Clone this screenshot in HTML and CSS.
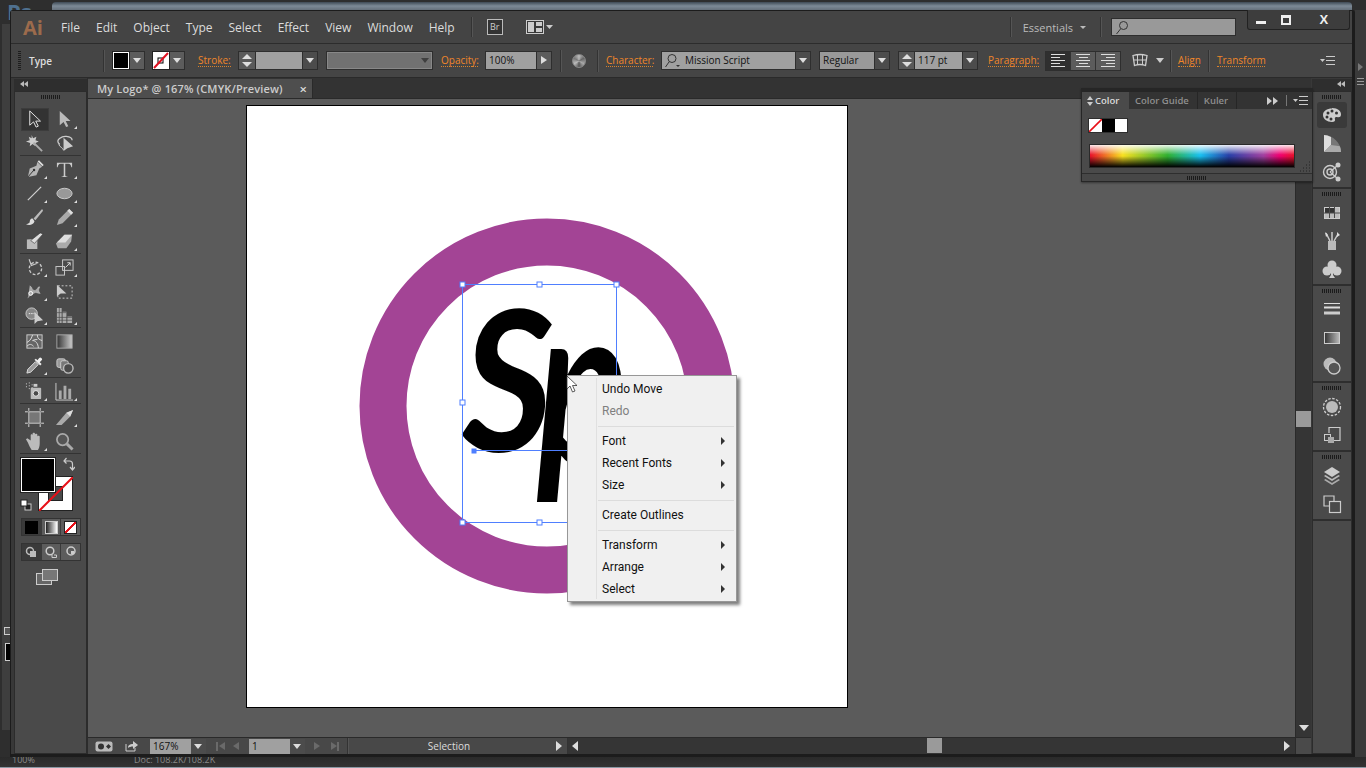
FILE: index.html
```html
<!DOCTYPE html>
<html lang="en">

<head>
	<meta charset="UTF-8">
	<meta name="viewport" content="width=device-width, initial-scale=1.0">
	<title>Adobe Illustrator - My Logo</title>
	<link rel="stylesheet" href="styles.css">
</head>

<body>

	<!-- windows behind the main one -->
	<div class="back-title"></div>
	<div class="back-ps">Ps</div>
	<div class="back-left"><span class="back-default"></span><span class="back-swatch"></span></div>
	<div class="back-status"><span class="back-zoom">100%</span><span class="back-doc">Doc: 108.2K/108.2K</span></div>
	<div class="back-edge"><span class="back-tri"></span><span class="back-lines"></span></div>

	<div class="window">

		<div class="menubar">
			<span class="logo">Ai</span>
			<nav class="menu">
				<span>File</span><span>Edit</span><span>Object</span><span>Type</span><span>Select</span><span>Effect</span><span>View</span><span>Window</span><span>Help</span>
			</nav>
			<span class="vsep bar-sep"></span>
			<span class="br">Br</span>
			<svg class="layout-ico" width="28" height="14" viewBox="0 0 28 14"><rect x="0.5" y="0.5" width="17" height="13" fill="#3a3a3a" stroke="#ccc"/><rect x="2" y="2" width="6" height="10" fill="#ccc"/><rect x="10" y="2" width="6" height="4" fill="#ccc"/><rect x="10" y="8" width="6" height="4" fill="#ccc"/><path d="M20 5h7l-3.500 4z" fill="#ccc"/></svg>
			<span class="vsep ess-sep"></span>
			<span class="essentials">Essentials</span>
			<span class="tiny-arrow"></span>
			<span class="vsep search-sep"></span>
			<div class="search">
				<svg width="14" height="16" viewBox="0 0 14 16"><circle cx="8.500" cy="5.500" r="4" fill="none" stroke="#333"/><path d="M5.500 9 1.500 14" stroke="#333"/></svg>
			</div>
			<div class="winbtns">
				<span class="winbtn"><i class="ico-min"></i></span>
				<span class="winbtn"><i class="ico-max"></i></span>
				<span class="winbtn close">X</span>
			</div>
		</div>

		<div class="controlbar">
			<span class="grip-v"></span>
			<span class="ctl-name">Type</span>
			<span class="vsep sep-a"></span>
			<span class="swatch fill-swatch"></span><span class="drop"></span>
			<span class="swatch stroke-swatch"><svg width="16" height="17" viewBox="0 0 16 17"><rect x="5" y="6" width="5" height="5" fill="none" stroke="#000"/><path d="M1 16 15 1" stroke="#e01020" stroke-width="2"/></svg></span><span class="drop"></span>
			<span class="orange lbl-stroke">Stroke:</span>
			<span class="spin"></span><span class="field stroke-field"></span><span class="drop dark"></span>
			<span class="field disabled-field"><i class="drop-off"></i></span>
			<span class="orange lbl-opacity">Opacity:</span>
			<span class="field opacity-field">100%</span><span class="drop side"></span>
			<span class="vsep sep-b"></span>
			<span class="globe"></span>
			<span class="vsep sep-c"></span>
			<span class="orange lbl-char">Character:</span>
			<span class="field font-field">
				<svg width="17" height="15" viewBox="0 0 17 15"><circle cx="8" cy="5.500" r="4" fill="none" stroke="#333"/><path d="M5 9 1.500 14" stroke="#333"/><path d="M12 12h4l-2 2z" fill="#333"/></svg>
				Mission Script
			</span><span class="drop dark"></span>
			<span class="field style-field">Regular</span><span class="drop dark"></span>
			<span class="spin size-spin"></span><span class="field size-field">117 pt</span><span class="drop dark"></span>
			<span class="orange lbl-para">Paragraph:</span>
			<div class="align-group">
				<span class="align on"><i class="l1"></i><i class="l2"></i><i class="l1"></i><i class="l2"></i><i class="l1"></i></span>
				<span class="align c"><i class="l1"></i><i class="l2"></i><i class="l1"></i><i class="l2"></i><i class="l1"></i></span>
				<span class="align r"><i class="l1"></i><i class="l2"></i><i class="l1"></i><i class="l2"></i><i class="l1"></i></span>
			</div>
			<svg class="envelope" width="16" height="15" viewBox="0 0 16 15"><path d="M1 2.500q7-2 14 0l-1.500 10q-5.500-2-11 0z" fill="none" stroke="#ccc" stroke-width="1.300"/><path d="M5.500 2v10M10.500 2v10M2 7h12" stroke="#ccc"/></svg>
			<span class="tiny-down"></span>
			<span class="vsep sep-d"></span>
			<span class="orange lbl-align">Align</span>
			<span class="vsep sep-e"></span>
			<span class="orange lbl-transform">Transform</span>
			<svg class="bar-menu" width="15" height="9" viewBox="0 0 15 9"><path d="M0 3h5L2.500 6z" fill="#ccc"/><path d="M6 .5h9M6 4.500h9M6 8.500h9" stroke="#ccc"/></svg>
		</div>

		<div class="workspace">

			<div class="left-col">
				<div class="collapse-strip"><span class="chev-left"></span></div>
				<div class="toolbar">
					<div class="grip-h"></div>

					<div class="tools">
						<span class="tool active"><svg viewBox="0 0 20 20"><path d="M5 1v15l4-3.500 2.700 5.500 2.300-1-2.700-5.300h5z" fill="#3a3a3a" stroke="#e8e8e8"/></svg></span>
						<span class="tool fly"><svg viewBox="0 0 20 20"><path d="M5 1v15l4-3.500 2.700 5.500 2.300-1-2.700-5.300h5z" fill="#bbb"/></svg></span>
						<span class="tool"><svg viewBox="0 0 20 20"><path d="M7 1l1.500 3.500L12 3l-1 3.500 3.500 1.500-3.500 1.500L11 13 8 10.500 5 13l.5-3.500L1 8l4-1.500L4 3l3 1.500z" fill="#ccc"/><path d="M9 9l9 9" stroke="#aaa" stroke-width="2"/></svg></span>
						<span class="tool"><svg viewBox="0 0 20 20"><path d="M5 11C-1 6 8 2 12 2.500s6 2 6 4" fill="none" stroke="#ccc" stroke-width="1.400"/><path d="M4 11c1 3 4 3 5 6" fill="none" stroke="#ccc"/><path d="M9 4v14l4-3 6-2z" fill="#ccc"/></svg></span>
					</div>
					<div class="tool-sep"></div>

					<div class="tools">
						<span class="tool fly"><svg viewBox="0 0 20 20"><path d="M13 2l5 5-3 2-3 7-9 2 2-9 7-3z" fill="#b5b5b5"/><path d="M3 18l6-7" stroke="#333"/><circle cx="9.500" cy="10.500" r="1.300" fill="#333"/><path d="M14 1l5 5" stroke="#ddd" stroke-width="2"/></svg></span>
						<span class="tool fly"><svg viewBox="0 0 20 20"><path d="M2 3h16v4.500h-.8c-.4-2-1.200-3.500-3-3.500h-3.400v12c0 1 .6 1.400 2.200 1.400v.6H7v-.6c1.600 0 2.200-.4 2.200-1.400V4H5.800c-1.800 0-2.600 1.500-3 3.500H2z" fill="#ccc"/></svg></span>
						<span class="tool fly"><svg viewBox="0 0 20 20"><path d="M3 17 17 3" stroke="#d0d0d0" stroke-width="1.300"/></svg></span>
						<span class="tool fly"><svg viewBox="0 0 20 20"><ellipse cx="10" cy="10" rx="8" ry="5.500" fill="#999" stroke="#ccc"/></svg></span>
						<span class="tool"><svg viewBox="0 0 20 20"><path d="M18 1 9 11l2 2L19 3z" fill="#bbb"/><path d="M8 11c-3 0-3 3-3 4-1 1-2 2-4 2 3 1.500 8 1 9-3z" fill="#ddd"/></svg></span>
						<span class="tool fly"><svg viewBox="0 0 20 20"><path d="M15 1l4 4-11 11-6 2 2-6z" fill="#aaa"/><path d="M15 1l4 4-2 2-4-4z" fill="#ddd"/></svg></span>
						<span class="tool"><svg viewBox="0 0 20 20"><path d="M2 8l11-1v11H2z" fill="#bbb"/><path d="M6 9l4 3 9-10-3-1z" fill="#ddd" stroke="#333" stroke-width=".6"/></svg></span>
						<span class="tool fly"><svg viewBox="0 0 20 20"><path d="M1 12 10 3h8l-1 7-5 7H3z" fill="#aaa"/><path d="M10 3h8l-7 8H2z" fill="#ddd"/></svg></span>
					</div>
					<div class="tool-sep"></div>

					<div class="tools">
						<span class="tool fly"><svg viewBox="0 0 20 20"><circle cx="11" cy="11" r="6.500" fill="none" stroke="#ccc" stroke-width="1.400" stroke-dasharray="3 2"/><path d="M6 1v7h6" fill="none" stroke="#ccc" stroke-width="1.200" transform="rotate(-20 6 6)"/></svg></span>
						<span class="tool fly"><svg viewBox="0 0 20 20"><rect x="8" y="2" width="11" height="11" fill="#4a4a4a" stroke="#ccc"/><rect x="1" y="9" width="9" height="9" fill="none" stroke="#ccc"/><path d="M11 10l5-5M13 5h3v3" fill="none" stroke="#ddd"/></svg></span>
						<span class="tool fly"><svg viewBox="0 0 20 20"><path d="M5 4c3 1 2 5 5 5s3-4 5-4-3 3 1 7c-4 0-4-2-7 0-2 2-5 2-6 5" fill="#aaa" stroke="#ccc" stroke-width=".5"/><circle cx="6" cy="12" r="2" fill="none" stroke="#fff"/></svg></span>
						<span class="tool"><svg viewBox="0 0 20 20"><rect x="3" y="4" width="15" height="13" fill="none" stroke="#ccc" stroke-dasharray="2 2"/><path d="M2 3v12l4-3h6z" fill="#ccc"/></svg></span>
						<span class="tool fly"><svg viewBox="0 0 20 20"><circle cx="7" cy="8" r="6" fill="#888" stroke="#ccc"/><path d="M4 8h6" stroke="#eee" stroke-dasharray="1.500 1"/><path d="M10 6v13l3-3 6-1z" fill="#ccc"/></svg></span>
						<span class="tool fly"><svg viewBox="0 0 20 20"><path d="M2 2h5v16H2zM8 6h4v12H8zM13 11h5v7h-5z" fill="#aaa"/><path d="M2 7h10M2 12h16M2 15h16M4.500 2v16" stroke="#4a4a4a" stroke-width=".7"/></svg></span>
					</div>
					<div class="tool-sep"></div>

					<div class="tools">
						<span class="tool"><svg viewBox="0 0 20 20"><rect x="2" y="3" width="16" height="14" fill="#666" stroke="#ccc"/><path d="M2 11c4-2 5-5 6-8M8 9c3 0 6 3 6 8M2 15c3-3 5-2 7 0M13 3c0 4 2 5 5 6M8 9c2-1 3-1 5-1" fill="none" stroke="#ddd"/></svg></span>
						<span class="tool"><svg viewBox="0 0 20 20"><defs><linearGradient id="gt"><stop offset="0" stop-color="#333"/><stop offset="1" stop-color="#ccc"/></linearGradient></defs><rect x="2" y="3" width="16" height="14" fill="url(#gt)" stroke="#aaa"/></svg></span>
						<span class="tool fly"><svg viewBox="0 0 20 20"><path d="M2 18l1-4 8-8 3 3-8 8z" fill="#999" stroke="#ddd"/><path d="M10 4l6 6 1.500-1.500-2-2 2.500-2.500a2 2 0 0 0-3-2l-2 2.500-1.500-1.500z" fill="#eee"/></svg></span>
						<span class="tool"><svg viewBox="0 0 20 20"><rect x="2" y="3" width="9" height="9" rx="2" fill="#999" stroke="#ccc"/><rect x="6" y="5" width="8" height="10" rx="2" fill="#777" stroke="#ccc"/><circle cx="14" cy="13" r="5" fill="#4a4a4a" stroke="#bbb" stroke-width="1.500"/></svg></span>
					</div>
					<div class="tool-sep"></div>

					<div class="tools">
						<span class="tool fly"><svg viewBox="0 0 20 20"><path d="M1 2h1M4 1h1M1 5h1M4 4h1M7 3h1M4 7h1M7 6h1" stroke="#ddd"/><rect x="9" y="2" width="4" height="3" fill="#ccc"/><rect x="6" y="6" width="11" height="12" rx="1" fill="#bbb"/><circle cx="11.500" cy="12" r="3" fill="#4a4a4a" stroke="#eee"/></svg></span>
						<span class="tool fly"><svg viewBox="0 0 20 20"><path d="M1 1v18h18" fill="none" stroke="#ccc"/><path d="M4 9h3v9H4zM9 4h3v14H9zM14 7h3v11h-3z" fill="#aaa"/></svg></span>
					</div>
					<div class="tool-sep"></div>

					<div class="tools">
						<span class="tool"><svg viewBox="0 0 20 20"><rect x="4" y="4" width="12" height="12" fill="#777" stroke="#ccc"/><path d="M0 4h3M17 4h3M0 16h3M17 16h3M4 0v3M16 0v3M4 17v3M16 17v3" stroke="#ddd"/></svg></span>
						<span class="tool fly"><svg viewBox="0 0 20 20"><path d="M1 18 12 5l7-3-3 7-9 9z" fill="#aaa"/><path d="M12 5l4 4 3-7z" fill="#ddd"/></svg></span>
						<span class="tool fly"><svg viewBox="0 0 20 20"><path d="M3 11 1 7.500l1.500-1L6 9V3.500C6 2 8 2 8 3.500V2c0-1.500 2.500-1.500 2.500 0v1c0-1.500 2.500-1.500 2.500 0v2c0-1.500 2.500-1.500 2.500 0v7c0 3-1 6-2 7H7c-1-2-3-5-4-8z" fill="#bbb"/></svg></span>
						<span class="tool"><svg viewBox="0 0 20 20"><circle cx="8" cy="8" r="6" fill="#555" stroke="#aaa" stroke-width="1.800"/><path d="M12.500 12.500 18.500 18.500" stroke="#aaa" stroke-width="3"/></svg></span>
					</div>
					<div class="tool-sep"></div>

					<div class="color-box">
						<span class="big-fill"></span>
						<span class="big-stroke"><i></i><svg width="34" height="34" viewBox="0 0 34 34"><path d="M0 34 34 0" stroke="#e81018" stroke-width="2"/></svg></span>
						<svg class="swap" width="12" height="14" viewBox="0 0 12 14"><path d="M1 4h5.500c2 0 3 1 3 3v5M3.500 1 1 4l2.500 2.500M7 10l2.500 3L12 10" fill="none" stroke="#ccc" stroke-width="1.200"/></svg>
						<svg class="default-colors" width="12" height="12" viewBox="0 0 12 12"><rect x="5" y="5" width="6" height="6" fill="#222" stroke="#ccc"/><rect x="1" y="1" width="6" height="6" fill="#fff" stroke="#222"/></svg>
					</div>

					<div class="mode-row">
						<span class="mode dark"><i class="mode-black"></i></span>
						<span class="mode"><i class="mode-grad"></i></span>
						<span class="mode"><i class="mode-none"></i></span>
					</div>

					<div class="mode-row draw-row">
						<span class="mode dark"><svg width="12" height="12" viewBox="0 0 12 12"><circle cx="5" cy="5" r="3.500" fill="none" stroke="#bbb" stroke-width="1.500"/><rect x="5" y="5" width="6" height="6" fill="#bbb"/></svg></span>
						<span class="mode"><svg width="12" height="12" viewBox="0 0 12 12"><circle cx="5" cy="5" r="3.800" fill="#555" stroke="#ccc" stroke-width="1.500"/><path d="M9 9h2.500v2.500H7V9" fill="none" stroke="#ccc"/></svg></span>
						<span class="mode"><svg width="12" height="12" viewBox="0 0 12 12"><circle cx="6" cy="5" r="4" fill="none" stroke="#ccc" stroke-width="1.500"/><rect x="6" y="5" width="3" height="3" fill="#ccc"/></svg></span>
					</div>

					<svg class="screen-mode" width="22" height="16" viewBox="0 0 22 16"><rect x="0.500" y="4.500" width="15" height="11" fill="#666" stroke="#ccc"/><rect x="6.500" y="0.500" width="15" height="11" fill="#777" stroke="#ccc"/></svg>
				</div>
			</div>

			<div class="doc-col">
				<div class="tabs">
					<div class="tab"><span>My Logo* @ 167% (CMYK/Preview)</span><span class="tab-x">×</span></div>
				</div>

				<div class="doc-row">
					<div class="canvas">
						<div class="artboard">
							<svg class="art" width="600" height="600" viewBox="0 0 600 600">
								<circle cx="300" cy="300" r="164" fill="none" stroke="#a34495" stroke-width="47"/>
								<g class="sp">
									<text transform="translate(215 345) scale(.9 1)">S</text>
									<text class="sp-p" transform="translate(290 358) scale(.75 1)">p</text>
								</g>
								<g class="sel">
									<rect x="215.500" y="178.500" width="154" height="238" fill="none"/>
									<path d="M228 344.500H370"/>
									<rect class="hd" x="213" y="176" width="5" height="5"/>
									<rect class="hd" x="290" y="176" width="5" height="5"/>
									<rect class="hd" x="367" y="176" width="5" height="5"/>
									<rect class="hd" x="213" y="294" width="5" height="5"/>
									<rect class="hd" x="213" y="414" width="5" height="5"/>
									<rect class="hd" x="290" y="414" width="5" height="5"/>
									<rect class="hd-f" x="225" y="343" width="4" height="4"/>
								</g>
							</svg>
						</div>

						<ul class="context-menu">
							<li>Undo Move</li>
							<li class="off">Redo</li>
							<li class="div"></li>
							<li class="sub">Font</li>
							<li class="sub">Recent Fonts</li>
							<li class="sub">Size</li>
							<li class="div"></li>
							<li>Create Outlines</li>
							<li class="div"></li>
							<li class="sub">Transform</li>
							<li class="sub">Arrange</li>
							<li class="sub">Select</li>
						</ul>
						<svg class="cursor" width="13" height="19" viewBox="0 0 13 19"><path d="M1 1v13l3-3 2.500 6 2.500-1-2.500-5.500H11z" fill="#fff" stroke="#333" stroke-width=".8"/></svg>
					</div>
					<div class="vscroll">
						<span class="vthumb"></span>
						<span class="arrow-down"></span>
					</div>
				</div>

				<div class="statusbar">
					<div class="status-left">
						<svg class="st-gear" width="18" height="11" viewBox="0 0 18 11"><rect x="0.500" y="0.500" width="17" height="10" rx="2" fill="#bbb"/><circle cx="6" cy="5.500" r="3" fill="#333"/><path d="M11 5.500l2.500-2.500 2.500 2.500-2.500 2.500z" fill="#333"/></svg>
						<svg class="st-share" width="13" height="12" viewBox="0 0 13 12"><path d="M1 4v7h9V8" fill="none" stroke="#ccc"/><path d="M3 8c0-3 2-4 5-4V1l5 4-5 4V6.500C6 6.500 4 7 3 8z" fill="#ccc"/></svg>
						<span class="field zoom-field">167%</span><span class="drop dark st-drop"></span>
						<span class="nav first"></span><span class="nav prev"></span>
						<span class="field page-field">1</span><span class="drop dark st-drop"></span>
						<span class="nav next"></span><span class="nav last"></span>
						<span class="vsep st-sep"></span>
						<span class="st-label">Selection</span>
						<span class="tri-right"></span>
						<span class="vsep st-sep2"></span>
					</div>
					<div class="hscroll">
						<span class="tri-left"></span>
						<span class="hthumb"></span>
						<span class="tri-right end"></span>
					</div>
					<div class="corner"></div>
				</div>
			</div>

			<div class="dock-col">
				<div class="collapse-strip right"><span class="chev-left"></span></div>
				<div class="dock">
					<div class="dock-group">
						<div class="grip-h"></div>
						<span class="dock-btn active"><svg viewBox="0 0 20 20"><path d="M10 3c6 0 9 3 9 6.500 0 3-2.500 3-4 2.500-2-.5-2.500 1-2 2.500.3 1.200-.5 2.500-3 2.500-5 0-9-3-9-7s4-6.500 9-6.500z" fill="#ccc"/><circle cx="6" cy="8" r="1.500" fill="#333"/><circle cx="10" cy="6" r="1.500" fill="#333"/><circle cx="14.500" cy="8" r="1.500" fill="#333"/><circle cx="5" cy="12" r="1.500" fill="#333"/><circle cx="9" cy="14" r="1.500" fill="#333"/></svg></span>
						<span class="dock-btn"><svg viewBox="0 0 20 20"><path d="M2 1v17h17C19 9 11 1 2 1z" fill="#777"/><path d="M2 1v17l7-7V3C6.500 1.700 4 1 2 1z" fill="#ddd"/><path d="M2 18h17c0-2-.4-4-1.100-5.800L9 11z" fill="#aaa"/></svg></span>
						<span class="dock-btn"><svg viewBox="0 0 20 20"><circle cx="8" cy="10" r="6.500" fill="none" stroke="#ccc" stroke-width="1.400"/><circle cx="8" cy="10" r="3" fill="none" stroke="#ccc" stroke-width="1.400"/><path d="M8 10 16 3M8 10l8 7" stroke="#ccc" stroke-width="1.200"/><circle cx="16" cy="3" r="2.500" fill="#ccc"/><circle cx="16" cy="17" r="2.500" fill="#ccc"/></svg></span>
					</div>
					<div class="dock-group">
						<div class="grip-h"></div>
						<span class="dock-btn"><svg viewBox="0 0 20 20"><rect x="2.500" y="4.500" width="15" height="11" fill="#bbb" stroke="#ccc"/><path d="M3 5h4.500v5H3zM8 5h4.500v5H8z" fill="#333"/><path d="M7.500 4v11M12.500 4v11M2 10h16" stroke="#4a4a4a"/></svg></span>
						<span class="dock-btn"><svg viewBox="0 0 20 20"><rect x="6" y="10" width="8" height="9" fill="#bbb"/><path d="M8 10 4 2M10 10V1M12 10l4-7" stroke="#ccc" stroke-width="1.500"/><path d="M3 1l3 3-2 2zM15 1l3 3-3 2z" fill="#ddd"/></svg></span>
						<span class="dock-btn"><svg viewBox="0 0 20 20"><circle cx="10" cy="6" r="4.500" fill="#ccc"/><circle cx="5" cy="12" r="4.500" fill="#ccc"/><circle cx="15" cy="12" r="4.500" fill="#ccc"/><path d="M9 10h2v6l2 3H7l2-3z" fill="#ccc"/></svg></span>
					</div>
					<div class="dock-group">
						<div class="grip-h"></div>
						<span class="dock-btn"><svg viewBox="0 0 20 20"><path d="M2 3.500h16" stroke="#ddd"/><path d="M2 7.500h16" stroke="#ddd" stroke-width="2"/><path d="M2 13h16" stroke="#ccc" stroke-width="3"/></svg></span>
						<span class="dock-btn"><svg viewBox="0 0 20 20"><defs><linearGradient id="gd"><stop offset="0" stop-color="#333"/><stop offset="1" stop-color="#bbb"/></linearGradient></defs><rect x="2.500" y="4.500" width="15" height="11" fill="url(#gd)" stroke="#ccc"/></svg></span>
						<span class="dock-btn"><svg viewBox="0 0 20 20"><circle cx="8" cy="8" r="6.500" fill="#bbb"/><circle cx="12" cy="12" r="6" fill="#555" stroke="#ccc" stroke-width="1.300"/></svg></span>
					</div>
					<div class="dock-group">
						<div class="grip-h"></div>
						<span class="dock-btn"><svg viewBox="0 0 20 20"><circle cx="10" cy="10" r="6" fill="#bbb"/><circle cx="10" cy="10" r="8.500" fill="none" stroke="#ccc" stroke-width="1.300" stroke-dasharray="2.500 1.500"/></svg></span>
						<span class="dock-btn"><svg viewBox="0 0 20 20"><path d="M7 8V2.500h11v13H12" fill="none" stroke="#ccc" stroke-width="1.200"/><rect x="2.500" y="9.500" width="6" height="6" fill="none" stroke="#ccc"/><rect x="6" y="12" width="6" height="6" fill="#aaa"/></svg></span>
					</div>
					<div class="dock-group">
						<div class="grip-h"></div>
						<span class="dock-btn"><svg viewBox="0 0 20 20"><path d="M10 1l8 5-8 5-8-5z" fill="#ccc"/><path d="M3.500 9 2 10l8 5 8-5-1.500-1L10 13z" fill="#bbb"/><path d="M3.500 13 2 14l8 5 8-5-1.500-1L10 17z" fill="#aaa"/></svg></span>
						<span class="dock-btn"><svg viewBox="0 0 20 20"><path d="M8 12H2V2h10v5" fill="none" stroke="#ccc" stroke-width="1.200"/><rect x="7.500" y="7.500" width="11" height="11" fill="none" stroke="#ccc" stroke-width="1.200"/></svg></span>
					</div>
				</div>
			</div>
		</div>

		<!-- floating color panel -->
		<div class="color-panel">
			<div class="panel-tabs">
				<span class="ptab current"><i class="updown"></i>Color</span>
				<span class="ptab">Color Guide</span>
				<span class="ptab">Kuler</span>
				<span class="panel-ctl">
					<svg width="13" height="8" viewBox="0 0 13 8"><path d="M0 0l5 4-5 4zM6 0l5 4-5 4z" fill="#ccc"/></svg>
					<span class="panel-bar"></span>
					<svg width="15" height="9" viewBox="0 0 15 9"><path d="M0 3h5L2.500 6z" fill="#ccc"/><path d="M6 .5h9M6 4.500h9M6 8.500h9" stroke="#ccc"/></svg>
				</span>
			</div>
			<div class="panel-body">
				<div class="mini-swatches">
					<span class="ms none"><svg width="13" height="13" viewBox="0 0 13 13"><path d="M0 13 13 0" stroke="#e81018" stroke-width="1.600"/></svg></span><span class="ms black"></span><span class="ms white"></span>
				</div>
				<div class="spectrum"></div>
				<svg class="resize" width="11" height="11" viewBox="0 0 11 11"><path d="M9 1h1M6 4h1M9 4h1M3 7h1M6 7h1M9 7h1M0 10h1M3 10h1M6 10h1M9 10h1" stroke="#222"/></svg>
			</div>
			<div class="panel-foot"><div class="grip-h"></div></div>
		</div>

	</div>

</body>

</html>
```

FILE: styles.css
```css
/* Basic reset */
* {
	margin: 0;
	padding: 0;
	box-sizing: border-box;
}

body {
	width: 1366px;
	height: 768px;
	overflow: hidden;
	position: relative;
	background-color: #2e2e2e;
	font-family: "Open Sans", "Noto Sans", sans-serif;
	font-size: 11px;
	color: #ddd;
}

i {
	display: block;
	font-style: normal;
}

/* stuff behind the main window */
.back-title {
	position: absolute;
	left: 52px;
	top: 2px;
	width: 1300px;
	height: 10px;
	background: linear-gradient(to bottom, #3f4a55, #7d8a96 40%, #59636d);
	border-radius: 4px 4px 0 0;
}

.back-ps {
	position: absolute;
	left: 7px;
	top: 0;
	font-size: 22px;
	line-height: 22px;
	font-weight: 700;
	color: #4f7190;
}

.back-left {
	position: absolute;
	left: 2px;
	top: 24px;
	width: 10px;
	height: 706px;
	background-color: #3e3e3e;
}

.back-default {
	position: absolute;
	left: 2px;
	top: 603px;
	width: 7px;
	height: 8px;
	border: 1px solid #ccc;
	background-color: #555;
}

.back-swatch {
	position: absolute;
	left: 3px;
	top: 619px;
	width: 7px;
	height: 18px;
	background-color: #000;
	border: 1px solid #ccc;
}

.back-status {
	position: absolute;
	left: 0;
	top: 757px;
	width: 1366px;
	height: 11px;
	background: linear-gradient(#2a2a2a, #333);
	border-bottom: 1px solid #8a98a4;
	font-size: 9px;
	color: #8a8a8a;
	line-height: 5px;
}

.back-zoom {
	position: absolute;
	left: 12px;
	top: 0;
}

.back-doc {
	position: absolute;
	left: 134px;
	top: 0;
}

.back-edge {
	position: absolute;
	left: 1355px;
	top: 10px;
	width: 11px;
	height: 747px;
	background-color: #3a3a3a;
}

.back-tri {
	position: absolute;
	left: 3px;
	top: 53px;
	border-left: 5px solid #777;
	border-top: 4px solid transparent;
	border-bottom: 4px solid transparent;
}

.back-lines {
	position: absolute;
	left: 2px;
	top: 68px;
	width: 7px;
	height: 8px;
	background: repeating-linear-gradient(to bottom, #999 0 1px, transparent 1px 3px);
}

/* main window */
.window {
	position: absolute;
	left: 10px;
	top: 10px;
	width: 1345px;
	height: 747px;
	display: flex;
	flex-direction: column;
	background-color: #434343;
	border: 1px solid #1c1c1c;
	border-bottom-width: 3px;
	border-right-width: 3px;
	border-radius: 3px 3px 0 0;
}

.vsep {
	display: block;
	width: 1px;
	background-color: #333;
	box-shadow: 1px 0 0 #555;
}

/* top menu */
.menubar {
	height: 33px;
	display: flex;
	align-items: center;
	flex-shrink: 0;
	border-bottom: 1px solid #2c2c2c;
	background-color: #444;
	position: relative;
}

.logo {
	width: 39px;
	padding-left: 12px;
	font-size: 20px;
	font-weight: 700;
	color: #9c6b4c;
}

.menu {
	display: flex;
	margin-left: 11px;
	font-size: 12px;
	color: #dcdcdc;
}

.menu span {
	margin-right: 16px;
}

.bar-sep {
	height: 20px;
}

.br {
	width: 16px;
	height: 16px;
	margin-left: 15px;
	border: 1px solid #bbb;
	background-color: #333;
	font-size: 9px;
	line-height: 14px;
	text-align: center;
	color: #ccc;
}

.layout-ico {
	margin-left: 23px;
}

.ess-sep {
	height: 20px;
	margin-left: 456px;
}

.essentials {
	margin-left: 12px;
	font-size: 11px;
	color: #bbb;
}

.tiny-arrow {
	margin-left: 7px;
	border-top: 3px solid #bbb;
	border-left: 3px solid transparent;
	border-right: 3px solid transparent;
}

.search-sep {
	height: 20px;
	margin-left: 14px;
}

.search {
	width: 125px;
	height: 18px;
	margin-left: 10px;
	padding: 1px 0 0 3px;
	background-color: #999;
	border: 1px solid #2e2e2e;
}

.winbtns {
	position: absolute;
	right: 2px;
	top: -1px;
	width: 103px;
	height: 20px;
	display: flex;
	background-color: #3d3d3d;
	border: 1px solid #222;
	border-top: none;
	border-radius: 0 0 3px 3px;
}

.winbtn {
	flex: 1;
	display: flex;
	align-items: center;
	justify-content: center;
	color: #eee;
	font-weight: 700;
	font-size: 13px;
}

.winbtn.close {
	flex: 2;
	font-family: "Liberation Sans", sans-serif;
}

.ico-min {
	width: 10px;
	height: 3px;
	margin-top: 6px;
	background-color: #eee;
}

.ico-max {
	width: 10px;
	height: 10px;
	border: 2px solid #eee;
	border-top-width: 3px;
}

/* control bar */
.controlbar {
	height: 34px;
	display: flex;
	align-items: center;
	flex-shrink: 0;
	background-color: #454545;
	border-bottom: 1px solid #2a2a2a;
	color: #ddd;
}

.grip-v {
	width: 3px;
	height: 20px;
	margin-left: 7px;
	background: repeating-linear-gradient(to bottom, #1e1e1e 0 1px, transparent 1px 2px);
}

.ctl-name {
	margin-left: 8px;
	width: 74px;
	font-size: 10px;
	font-weight: 600;
}

.sep-a, .sep-b, .sep-c, .sep-d, .sep-e {
	height: 22px;
}

.swatch {
	width: 18px;
	height: 19px;
	border: 1px solid #222;
	display: block;
}

.fill-swatch {
	margin-left: 8px;
	background-color: #000;
	outline: 1px solid #fff;
	outline-offset: -2px;
}

.stroke-swatch {
	margin-left: 7px;
	background-color: #fff;
	line-height: 0;
}

.drop {
	width: 15px;
	height: 19px;
	display: block;
	position: relative;
	background-color: #5c5c5c;
	border: 1px solid #2e2e2e;
	border-left: none;
}

.drop::after {
	content: "";
	position: absolute;
	left: 3px;
	top: 6px;
	border-top: 5px solid #ddd;
	border-left: 4px solid transparent;
	border-right: 4px solid transparent;
}

.drop.side::after {
	left: 4px;
	top: 4px;
	border-left: 6px solid #ddd;
	border-top: 4px solid transparent;
	border-bottom: 4px solid transparent;
	border-right: none;
}

.drop.dark {
	background-color: #4c4c4c;
}

.orange {
	color: #f0862a;
	font-size: 10px;
	border-bottom: 1px dotted #d9822b;
	line-height: 12px;
	white-space: nowrap;
}

.lbl-stroke {
	margin-left: 13px;
	width: 33px;
}

.spin {
	display: block;
	width: 18px;
	height: 19px;
	margin-left: 7px;
	border: 1px solid #2e2e2e;
	background-color: #5a5a5a;
	position: relative;
}

.spin::before, .spin::after {
	content: "";
	position: absolute;
	left: 3px;
	border-left: 5px solid transparent;
	border-right: 5px solid transparent;
}

.spin::before {
	top: 2px;
	border-bottom: 5px solid #ddd;
}

.spin::after {
	bottom: 2px;
	border-top: 5px solid #ddd;
}

.field {
	display: block;
	height: 19px;
	background-color: #a0a0a0;
	border: 1px solid #2e2e2e;
	color: #111;
	font-size: 10px;
	line-height: 17px;
	padding-left: 3px;
	white-space: nowrap;
}

.stroke-field {
	width: 47px;
	border-left: none;
}

.disabled-field {
	position: relative;
	width: 107px;
	margin-left: 8px;
	background-color: #717171;
	outline: 1px solid #888;
	outline-offset: -2px;
}

.drop-off {
	position: absolute;
	right: 3px;
	top: 6px;
	border-top: 5px solid #3f3f3f;
	border-left: 4px solid transparent;
	border-right: 4px solid transparent;
}

.lbl-opacity {
	margin-left: 8px;
	width: 37px;
}

.opacity-field {
	width: 52px;
	margin-left: 7px;
}

.sep-b {
	margin-left: 8px;
}

.globe {
	display: block;
	width: 14px;
	height: 14px;
	margin-left: 11px;
	border-radius: 50%;
	background: conic-gradient(#bbb, #666, #aaa, #555, #bbb, #777, #bbb);
	border: 1px solid #888;
}

.sep-c {
	margin-left: 11px;
}

.lbl-char {
	margin-left: 8px;
	width: 47px;
}

.font-field {
	display: flex;
	align-items: center;
	gap: 4px;
	width: 135px;
	margin-left: 8px;
	padding-left: 2px;
}

.style-field {
	width: 56px;
	margin-left: 8px;
	background-color: #999;
}

.size-spin {
	margin-left: 8px;
	width: 17px;
}

.size-field {
	width: 48px;
	border-left: none;
}

.lbl-para {
	margin-left: 10px;
	width: 51px;
}

.align-group {
	display: flex;
	margin-left: 6px;
	height: 20px;
	width: 76px;
	border: 1px solid #2e2e2e;
	background-color: #5c5c5c;
}

.align {
	flex: 1;
	display: flex;
	flex-direction: column;
	justify-content: center;
	align-items: center;
	gap: 2px;
	border-left: 1px solid #333;
}

.align.on {
	background-color: #2f2f2f;
	align-items: center;
	border-left: none;
}

.align .l1 {
	width: 14px;
	height: 1px;
	background-color: #ddd;
}

.align .l2 {
	width: 9px;
	height: 1px;
	background-color: #ddd;
}

.align.on .l2 {
	margin-right: 5px;
}

.align.r .l2 {
	margin-left: 5px;
}

.envelope {
	margin-left: 11px;
}

.tiny-down {
	margin-left: 8px;
	border-top: 5px solid #ccc;
	border-left: 4px solid transparent;
	border-right: 4px solid transparent;
}

.sep-d {
	margin-left: 6px;
}

.lbl-align {
	margin-left: 7px;
	width: 22px;
}

.sep-e {
	margin-left: 8px;
}

.lbl-transform {
	margin-left: 8px;
	width: 48px;
}

.bar-menu {
	margin-left: 55px;
}

/* workspace */
.workspace {
	flex: 1;
	min-height: 0;
	display: flex;
	background-color: #333;
}

.left-col {
	width: 77px;
	flex-shrink: 0;
	display: flex;
	flex-direction: column;
	background-color: #383838;
	padding-left: 3px;
	border-right: 1px solid #2c2c2c;
}

.collapse-strip {
	height: 12px;
	background-color: #2e2e2e;
	position: relative;
	flex-shrink: 0;
	margin-top: 1px;
}

.chev-left {
	position: absolute;
	left: 6px;
	top: 2px;
	width: 9px;
	height: 7px;
}

.chev-left::before, .chev-left::after {
	content: "";
	position: absolute;
	top: 0;
	border-right: 4px solid #bbb;
	border-top: 3px solid transparent;
	border-bottom: 3px solid transparent;
}

.chev-left::before {
	left: 0;
}

.chev-left::after {
	left: 4px;
}

.toolbar {
	flex: 1;
	background-color: #4a4a4a;
	border: 1px solid #2c2c2c;
	padding: 3px 0 0;
	display: flex;
	flex-direction: column;
}

.grip-h {
	height: 4px;
	width: 20px;
	margin: 0 auto;
	background: repeating-linear-gradient(to right, #1b1b1b 0 1px, transparent 1px 2px);
}

.tools {
	display: grid;
	grid-template-columns: 30px 30px;
	grid-auto-rows: 24px;
	justify-content: center;
	padding-right: 2px;
}

.toolbar > .grip-h + .tools {
	margin-top: 8px;
}

.tool {
	position: relative;
	display: flex;
	align-items: center;
	justify-content: center;
}

.tool svg {
	width: 19px;
	height: 19px;
}

.tool.active {
	background-color: #333;
	border: 1px solid #3c3c3c;
	margin: 1px 1px 0;
}

.tool.fly::after {
	content: "";
	position: absolute;
	right: 3px;
	bottom: 2px;
	border-right: 3px solid #ddd;
	border-top: 3px solid transparent;
}

.tool-sep {
	height: 1px;
	margin: 0 5px 1px;
	background-color: #333;
}

.color-box {
	position: relative;
	height: 55px;
	margin-top: 2px;
}

.big-fill {
	position: absolute;
	left: 6px;
	top: 1px;
	z-index: 1;
	width: 34px;
	height: 34px;
	background-color: #000;
	border: 1px solid #fff;
	outline: 1px solid #222;
}

.big-stroke {
	position: absolute;
	left: 23px;
	top: 19px;
	width: 35px;
	height: 35px;
	background-color: #fff;
	border: 1px solid #222;
	line-height: 0;
}

.big-stroke i {
	position: absolute;
	left: 9px;
	top: 9px;
	width: 15px;
	height: 15px;
	background-color: #4a4a4a;
	border: 1px solid #222;
}

.big-stroke svg {
	position: absolute;
	left: 0;
	top: 0;
}

.swap {
	position: absolute;
	left: 48px;
	top: 0;
}

.default-colors {
	position: absolute;
	left: 5px;
	top: 42px;
}

.mode-row {
	display: flex;
	width: 60px;
	height: 18px;
	margin: 6px 0 0 6px;
	border: 1px solid #333;
}

.draw-row {
	margin-top: 7px;
}

.mode {
	flex: 1;
	display: flex;
	align-items: center;
	justify-content: center;
	background-color: #5c5c5c;
	border-left: 1px solid #3a3a3a;
}

.mode.dark {
	background-color: #3a3a3a;
	border-left: none;
}

.mode i {
	width: 13px;
	height: 13px;
}

.mode-black {
	background-color: #000;
}

.mode-grad {
	background: linear-gradient(to right, #222, #fff);
	border: 1px solid #ccc;
}

.mode-none {
	background: linear-gradient(to bottom right, #fff 44%, #e81018 44% 56%, #fff 56%);
	border: 1px solid #222;
}

.screen-mode {
	margin: 8px 0 0 21px;
}

/* document column */
.doc-col {
	flex: 1;
	min-width: 0;
	display: flex;
	flex-direction: column;
	position: relative;
}

.tabs {
	height: 21px;
	flex-shrink: 0;
	background-color: #333;
	display: flex;
	border-bottom: 1px solid #2a2a2a;
	padding-top: 1px;
}

.tab {
	width: 225px;
	display: flex;
	align-items: center;
	padding-left: 9px;
	background-color: #4e4e4e;
	color: #ccc;
	font-size: 11px;
	font-weight: 600;
	letter-spacing: 0.15px;
	border-right: 1px solid #2a2a2a;
}

.tab-x {
	margin-left: auto;
	margin-right: 5px;
	font-size: 13px;
	color: #ddd;
}

.doc-row {
	flex: 1;
	min-height: 0;
	display: flex;
}

.canvas {
	flex: 1;
	position: relative;
	background-color: #5b5b5b;
	padding: 6px 0 0 158px;
}

.artboard {
	width: 602px;
	height: 603px;
	background-color: #fff;
	border: 1px solid #000;
}

.art {
	display: block;
}

/* the logo, real text: no script font is installed */
.sp text {
	font-family: "Lato", "Liberation Sans", sans-serif;
	font-weight: 700;
	font-style: italic;
	font-size: 196px;
	fill: #000;
}

.sp .sp-p {
	font-size: 224px;
}

.sel {
	stroke: #4f7fff;
	fill: none;
}

.sel .hd {
	fill: #fff;
}

.sel .hd-f {
	fill: #4f7fff;
}

/* right-click menu */
.context-menu {
	position: absolute;
	left: 479px;
	top: 276px;
	width: 170px;
	height: 227px;
	list-style: none;
	padding: 2px 2px 0 0;
	background-color: #f0f0f0;
	border: 1px solid #979797;
	box-shadow: 3px 3px 3px rgba(0, 0, 0, 0.5);
	color: #111;
	font-family: "Roboto", "Open Sans", sans-serif;
	font-size: 12px;
}

.context-menu::before {
	content: "";
	position: absolute;
	left: 28px;
	top: 2px;
	bottom: 2px;
	width: 1px;
	background-color: #e0e0e0;
}

.context-menu li {
	height: 22px;
	line-height: 22px;
	padding-left: 34px;
	position: relative;
}

.context-menu li.off {
	color: #7f7f7f;
}

.context-menu li.div {
	height: 8px;
	margin: 0 0 0 30px;
	padding: 0;
	background: linear-gradient(#dcdcdc, #dcdcdc) center / 100% 1px no-repeat;
}

.context-menu li.sub::after {
	content: "";
	position: absolute;
	right: 9px;
	top: 7px;
	border-left: 4px solid #333;
	border-top: 4px solid transparent;
	border-bottom: 4px solid transparent;
}

.cursor {
	position: absolute;
	left: 478px;
	top: 276px;
}

/* scrollbars */
.vscroll {
	width: 16px;
	flex-shrink: 0;
	background-color: #353535;
	position: relative;
	border-left: 1px solid #2a2a2a;
}

.vthumb {
	position: absolute;
	left: 0;
	top: 312px;
	width: 15px;
	height: 16px;
	background-color: #9a9a9a;
}

.arrow-down {
	position: absolute;
	left: 3px;
	bottom: 6px;
	border-top: 6px solid #ddd;
	border-left: 5px solid transparent;
	border-right: 5px solid transparent;
}

.statusbar {
	height: 16px;
	flex-shrink: 0;
	display: flex;
	background-color: #3d3d3d;
	border-top: 1px solid #2a2a2a;
	box-sizing: content-box;
}

.status-left {
	width: 480px;
	display: flex;
	align-items: center;
	background-color: #484848;
	color: #ddd;
	padding-left: 7px;
}

.st-share {
	margin-left: 12px;
}

.zoom-field {
	width: 41px;
	height: 15px;
	margin-left: 12px;
	line-height: 14px;
	border: none;
}

.page-field {
	width: 41px;
	height: 15px;
	line-height: 15px;
	border: none;
}

.st-drop {
	height: 15px;
	width: 15px;
	border: none;
	background-color: #5a5a5a;
}

.st-drop::after {
	top: 5px;
}

.nav {
	display: block;
	width: 8px;
	height: 9px;
	position: relative;
}

.nav::after {
	content: "";
	position: absolute;
	top: 0;
	border-top: 4.500px solid transparent;
	border-bottom: 4.500px solid transparent;
}

.first {
	border-left: 2px solid #6a6a6a;
	margin-left: 10px;
}

.first::after, .prev::after {
	border-right: 6px solid #6a6a6a;
	left: 1px;
}

.prev {
	margin-left: 8px;
	margin-right: 9px;
}

.next {
	margin-left: 9px;
}

.last {
	margin-left: 9px;
	border-right: 2px solid #6a6a6a;
}

.next::after, .last::after {
	border-left: 6px solid #6a6a6a;
	left: 0;
}

.st-sep {
	height: 16px;
	margin-left: 8px;
}

.st-label {
	width: 202px;
	text-align: center;
	font-size: 10px;
	color: #ddd;
}

.tri-right {
	display: block;
	border-left: 6px solid #ddd;
	border-top: 5px solid transparent;
	border-bottom: 5px solid transparent;
	margin-left: 6px;
}

.st-sep2 {
	height: 16px;
	margin-left: 5px;
}

.hscroll {
	flex: 1;
	position: relative;
	background-color: #353535;
}

.tri-left {
	position: absolute;
	left: 4px;
	top: 3px;
	border-right: 6px solid #ddd;
	border-top: 5px solid transparent;
	border-bottom: 5px solid transparent;
}

.hthumb {
	position: absolute;
	left: 359px;
	top: 0;
	width: 15px;
	height: 15px;
	background-color: #9a9a9a;
}

.tri-right.end {
	position: absolute;
	right: 5px;
	top: 3px;
}

.corner {
	width: 16px;
	background-color: #4a4a4a;
	border-left: 1px solid #2a2a2a;
}

/* right dock */
.dock-col {
	width: 41px;
	flex-shrink: 0;
	display: flex;
	flex-direction: column;
	padding-left: 1px;
	background-color: #383838;
}

.collapse-strip.right .chev-left {
	left: 25px;
}

.dock {
	flex: 1;
	background-color: #4a4a4a;
	border: 1px solid #2c2c2c;
	display: flex;
	flex-direction: column;
}

.dock-group {
	display: flex;
	flex-direction: column;
	align-items: center;
	padding: 3px 0 1px;
	border-bottom: 2px solid #2e2e2e;
}

.dock-group .grip-h {
	margin-bottom: 3px;
}

.dock-btn {
	width: 30px;
	height: 28px;
	display: flex;
	align-items: center;
	justify-content: center;
}

.dock-btn svg {
	width: 20px;
	height: 20px;
}

.dock-btn.active {
	background-color: #3a3a3a;
	border-radius: 3px;
	height: 26px;
	margin-bottom: 2px;
}

/* floating panel */
.color-panel {
	position: absolute;
	left: 1070px;
	top: 77px;
	width: 232px;
	height: 94px;
	display: flex;
	flex-direction: column;
	background-color: #4a4a4a;
	border: 1px solid #262626;
	border-top: 4px solid #262626;
	box-shadow: 0 1px 2px rgba(0, 0, 0, 0.4);
	z-index: 2;
}

.panel-tabs {
	height: 17px;
	display: flex;
	background-color: #333;
	flex-shrink: 0;
}

.ptab {
	padding: 0 8px 0 6px;
	font-size: 9.500px;
	font-weight: 600;
	line-height: 17px;
	color: #8f8f8f;
	border-right: 1px solid #262626;
	white-space: nowrap;
}

.ptab.current {
	position: relative;
	padding-left: 13px;
	width: 47px;
	background-color: #4a4a4a;
	color: #ddd;
	border-right: none;
}

.updown {
	position: absolute;
	left: 5px;
	top: 4px;
	width: 6px;
	height: 10px;
}

.updown::before, .updown::after {
	content: "";
	position: absolute;
	left: 0;
	border-left: 3px solid transparent;
	border-right: 3px solid transparent;
}

.updown::before {
	top: 0;
	border-bottom: 4px solid #ccc;
}

.updown::after {
	bottom: 0;
	border-top: 4px solid #ccc;
}

.panel-ctl {
	margin-left: auto;
	display: flex;
	align-items: center;
	gap: 6px;
	padding-right: 4px;
}

.panel-bar {
	width: 1px;
	height: 11px;
	background-color: #777;
}

.panel-body {
	flex: 1;
	position: relative;
	padding: 9px 0 0 6px;
}

.mini-swatches {
	display: flex;
	width: 40px;
	height: 15px;
	border: 1px solid #2e2e2e;
	background-color: #2e2e2e;
}

.ms {
	width: 13px;
	height: 13px;
	display: block;
	line-height: 0;
}

.ms.none, .ms.white {
	background-color: #fff;
}

.ms.black {
	background-color: #000;
}

.spectrum {
	width: 206px;
	height: 24px;
	margin-top: 11px;
	margin-left: 1px;
	border: 1px solid #2a2a2a;
	background:
		linear-gradient(to bottom, rgba(255,255,255,0.9), rgba(255,255,255,0) 45%, rgba(0,0,0,0) 50%, #000 100%),
		linear-gradient(to right, #e8102a, #f8e020 16%, #30b030 38%, #18c0f0 54%, #2840a8 68%, #a040a0 85%, #f00070 93%, #e8102a);
}

.resize {
	position: absolute;
	right: 1px;
	bottom: 1px;
}

.panel-foot {
	height: 8px;
	flex-shrink: 0;
	padding-top: 2px;
	background-color: #474747;
	border-top: 1px solid #2e2e2e;
}
```
